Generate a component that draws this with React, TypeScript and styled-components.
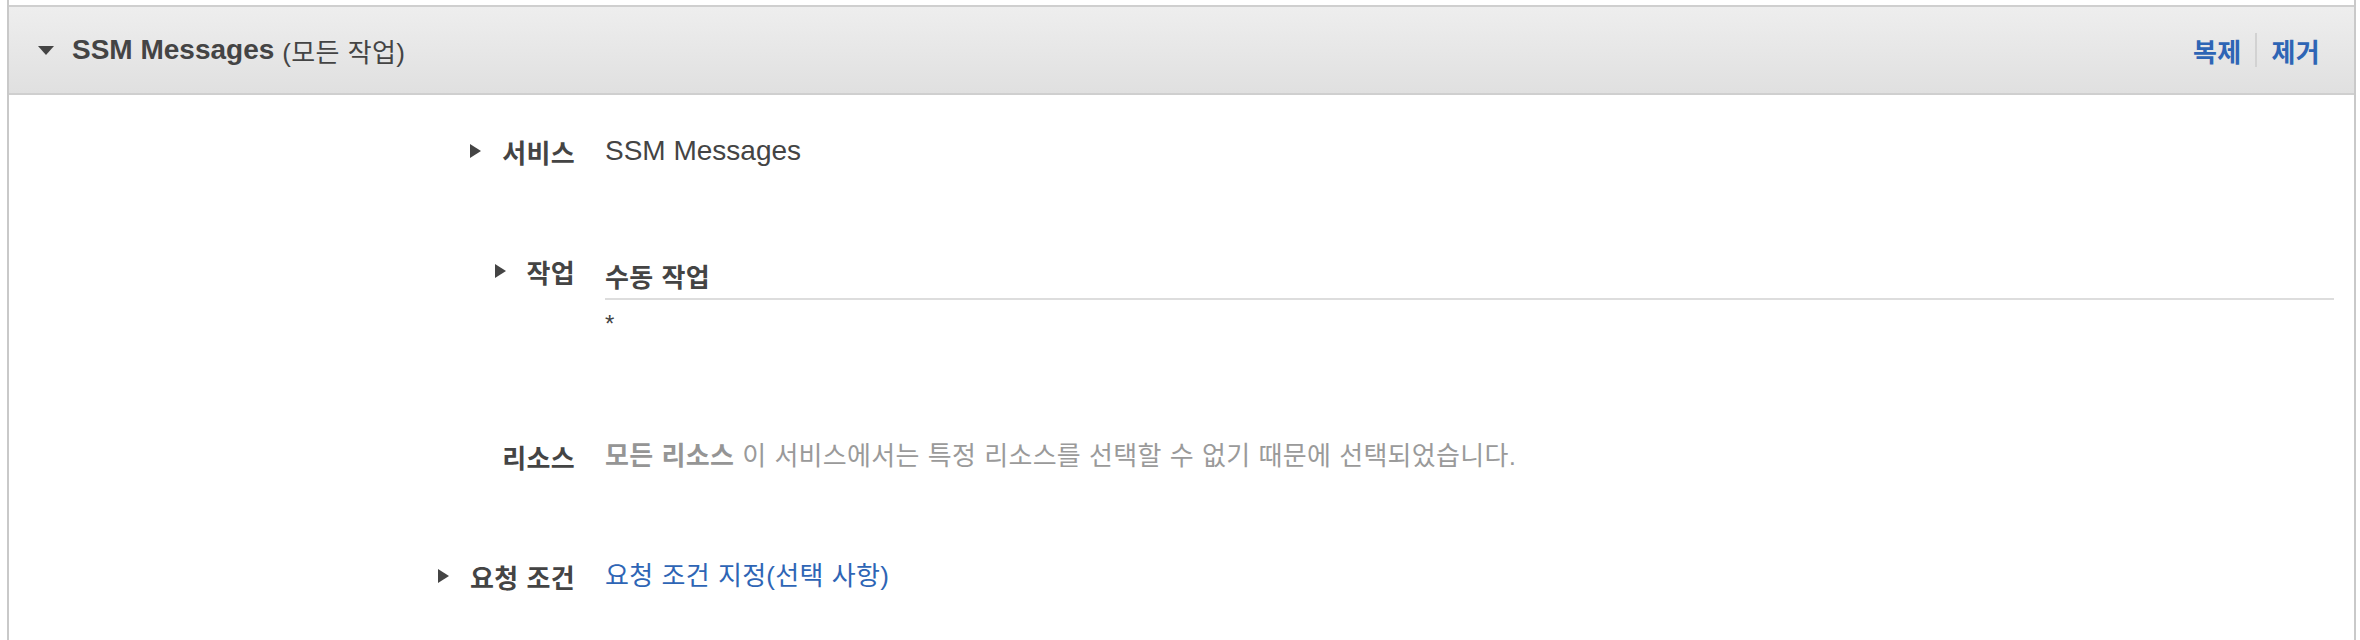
import React from 'react';
import styled, { createGlobalStyle, css } from 'styled-components';

const GlobalStyle = createGlobalStyle`
    html, body {
        margin: 0;
        padding: 0;
        background: #ffffff;
    }
    body {
        font-family: "Liberation Sans", "Noto Sans CJK KR", sans-serif;
        color: #444444;
    }
`;

// 한글 글자 크기/폭 맞춤
const ko = css`
    font-size: 26px;
    letter-spacing: 0.3px;
    word-spacing: 0.5px;
`;

const App: React.FC = () => {
    return (
        <>
            <GlobalStyle />
            <Page>
                <Panel>
                    <Header>
                        <HeaderTitle>
                            <CaretDown />
                            <TitleMain>SSM Messages</TitleMain>
                            <TitleSub>(모든 작업)</TitleSub>
                        </HeaderTitle>
                        <Actions>
                            <ActionLink>복제</ActionLink>
                            <ActionDivider />
                            <ActionLink>제거</ActionLink>
                        </Actions>
                    </Header>

                    <Form>
                        <Label>
                            <CaretRight />
                            서비스
                        </Label>
                        <Value>SSM Messages</Value>

                        <Label>
                            <CaretRight />
                            작업
                        </Label>
                        <ActionsValue>
                            <ActionsTitle>수동 작업</ActionsTitle>
                            <Asterisk>*</Asterisk>
                        </ActionsValue>

                        <Label>리소스</Label>
                        <Muted>
                            <MutedStrong>모든 리소스</MutedStrong> 이 서비스에서는 특정 리소스를 선택할 수 없기 때문에
                            선택되었습니다.
                        </Muted>

                        <Label>
                            <CaretRight />
                            요청 조건
                        </Label>
                        <Link>요청 조건 지정(선택 사항)</Link>
                    </Form>
                </Panel>
            </Page>
        </>
    );
};
export default App;

const Page = styled.div`
    height: 640px;
    padding: 0 4px 0 7px;
    box-sizing: border-box;
`;

const Panel = styled.section`
    height: 100%;
    padding-top: 5px;
    box-sizing: border-box;
    border-left: 2px solid #c9c9c9;
    border-right: 2px solid #c9c9c9;
`;

const Header = styled.div`
    height: 86px;
    display: flex;
    align-items: center;
    justify-content: space-between;
    padding: 0 34px 0 29px;
    background: linear-gradient(#eeeeee, #e0e0e0);
    border-top: 2px solid #cfcfcf;
    border-bottom: 2px solid #cfcfcf;
`;

const HeaderTitle = styled.div`
    display: flex;
    align-items: center;
`;

const CaretDown = styled.span`
    width: 0;
    height: 0;
    border-top: 9px solid #444444;
    border-left: 8.5px solid transparent;
    border-right: 8.5px solid transparent;
    margin-right: 18px;
`;

const TitleMain = styled.span`
    font-size: 28px;
    font-weight: 700;
    color: #444444;
    margin-right: 8px;
`;

const TitleSub = styled.span`
    ${ko};
    font-weight: 400;
    color: #444444;
`;

const Actions = styled.div`
    display: flex;
    align-items: center;
`;

const ActionLink = styled.span`
    ${ko};
    font-weight: 700;
    color: #2e65b5;
    cursor: pointer;
`;

const ActionDivider = styled.span`
    width: 2px;
    height: 34px;
    background: #d2d2d2;
    margin: 0 15px 0 13px;
`;

const Form = styled.div`
    display: grid;
    grid-template-columns: 566px 1fr;
    column-gap: 30px;
    row-gap: 80px;
    align-items: start;
    padding: 36px 20px 0 0;
`;

const Label = styled.div`
    ${ko};
    height: 40px;
    display: flex;
    align-items: center;
    justify-content: flex-end;
    gap: 21px;
    font-weight: 700;
    color: #444444;
`;

const CaretRight = styled.span`
    width: 0;
    height: 0;
    border-left: 11px solid #444444;
    border-top: 7.5px solid transparent;
    border-bottom: 7.5px solid transparent;
`;

const Value = styled.div`
    font-size: 28px;
    line-height: 40px;
    color: #444444;
`;

const ActionsValue = styled.div`
    padding-top: 7px;
`;

const ActionsTitle = styled.div`
    ${ko};
    line-height: 40px;
    font-weight: 700;
    color: #444444;
    border-bottom: 2px solid #dddddd;
`;

const Asterisk = styled.div`
    font-size: 24px;
    line-height: 40px;
    margin-top: 4px;
    padding-bottom: 12px;
    color: #444444;
`;

const Muted = styled.div`
    ${ko};
    line-height: 40px;
    color: #9a9a9a;
`;

const MutedStrong = styled.span`
    font-weight: 700;
    color: #959595;
`;

const Link = styled.div`
    ${ko};
    line-height: 40px;
    color: #2e65b5;
    cursor: pointer;
`;
